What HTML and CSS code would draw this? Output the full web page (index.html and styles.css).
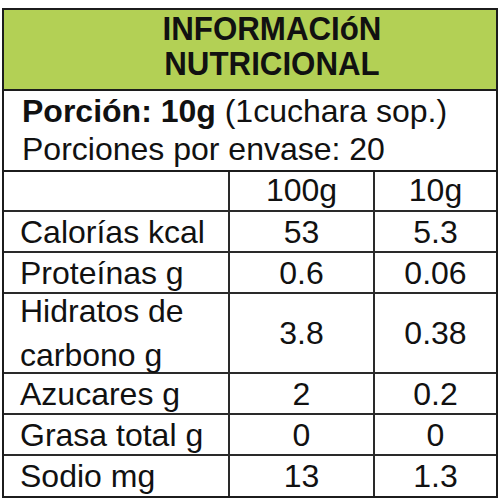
FILE: index.html
```html
<!DOCTYPE html>
<html lang="es">
<head>
<meta charset="utf-8">
<title>Información nutricional</title>
<link rel="stylesheet" href="styles.css">
</head>
<body>
<div class="label">
  <div class="title">
    <div class="title-line">INFORMACIóN</div>
    <div class="title-line">NUTRICIONAL</div>
  </div>
  <div class="serving">
    <div class="serving-line"><b>Porción: 10g</b> (1cuchara sop.)</div>
    <div class="serving-line">Porciones por envase: 20</div>
  </div>
  <div class="row row-head">
    <div class="cell name"></div>
    <div class="cell val">100g</div>
    <div class="cell val">10g</div>
  </div>
  <div class="row">
    <div class="cell name">Calorías kcal</div>
    <div class="cell val">53</div>
    <div class="cell val">5.3</div>
  </div>
  <div class="row">
    <div class="cell name">Proteínas g</div>
    <div class="cell val">0.6</div>
    <div class="cell val">0.06</div>
  </div>
  <div class="row row-tall">
    <div class="cell name"><span class="two-line">Hidratos de<br>carbono g</span></div>
    <div class="cell val">3.8</div>
    <div class="cell val">0.38</div>
  </div>
  <div class="row">
    <div class="cell name">Azucares g</div>
    <div class="cell val">2</div>
    <div class="cell val">0.2</div>
  </div>
  <div class="row">
    <div class="cell name">Grasa total g</div>
    <div class="cell val">0</div>
    <div class="cell val">0</div>
  </div>
  <div class="row">
    <div class="cell name">Sodio mg</div>
    <div class="cell val">13</div>
    <div class="cell val">1.3</div>
  </div>
</div>
</body>
</html>
```
FILE: styles.css
```css
* { box-sizing: border-box; }
html, body { margin: 0; padding: 0; background: #fff; }
body {
  font-family: "Liberation Sans", Arial, sans-serif;
  color: #111;
}
.label {
  margin: 8px 0 0 2px;
  width: 496px;
  border: 2px solid #1c1c1c;
}
.title {
  height: 81px;
  background: #b3d055;
  border-bottom: 2px solid #1c1c1c;
  padding-top: 1px;
  padding-left: 44px;
  text-align: center;
}
.title-line {
  font-weight: bold;
  font-size: 34px;
  line-height: 35px;
  transform: scaleX(0.92);
}
.serving {
  padding-top: 1px;
  padding-left: 18px;
  border-bottom: 2px solid #1c1c1c;
  height: 81px;
}
.serving-line {
  font-size: 32px;
  line-height: 38px;
}
.row {
  display: grid;
  grid-template-columns: 224px 145px 1fr;
  height: 41px;
  border-bottom: 2px solid #2a2a2a;
}
.row:last-child { border-bottom: none; height: 40px; }
.row-head { height: 40px; }
.row-tall { height: 80px; }
.cell {
  font-size: 32px;
  line-height: 39px;
  padding-top: 1px;
}
.val {
  border-left: 2px solid #2a2a2a;
  text-align: center;
}
.row-tall .val { padding-top: 20px; }
.name { padding-left: 16px; }
.row-head .cell { line-height: 36px; padding-top: 0; }
.two-line { display: block; line-height: 44px; margin-top: -6px; }
```
